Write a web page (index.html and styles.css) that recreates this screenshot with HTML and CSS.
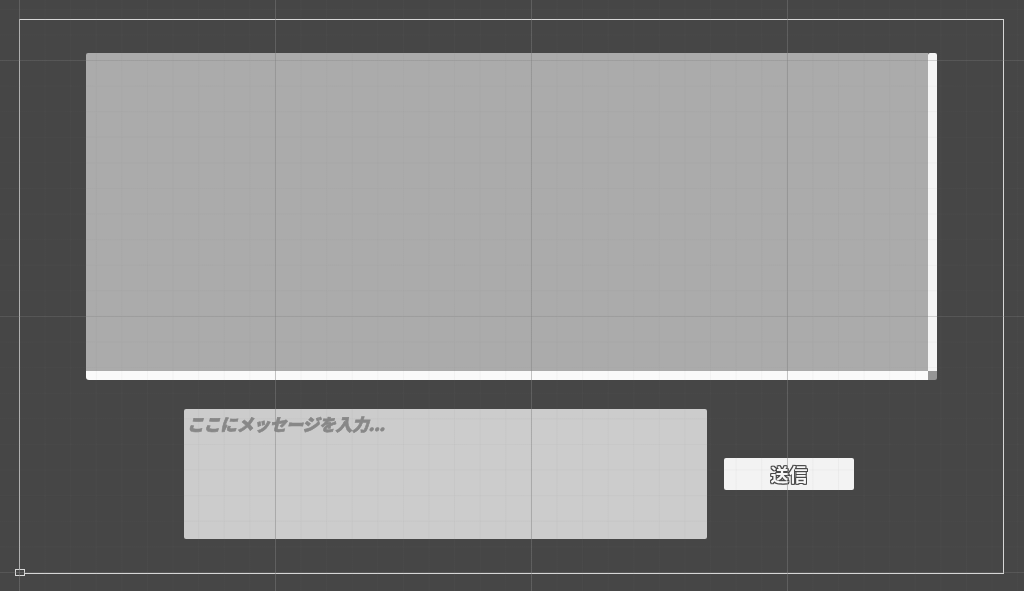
FILE: index.html
```html
<!DOCTYPE html>
<html lang="ja">
<head>
  <meta charset="UTF-8">
  <meta name="viewport" content="width=device-width, initial-scale=1.0">
  <title>Chat Canvas</title>
  <link rel="stylesheet" href="styles.css">
</head>
<body>
  <div class="canvas">
    <div class="chat-log">
      <div class="log-view"></div>
      <div class="scroll-v"></div>
      <div class="scroll-h"></div>
      <div class="scroll-corner"></div>
    </div>

    <div class="input-row">
      <div class="message-input">ここにメッセージを入力...</div>
      <button class="send-button" type="button">送信</button>
    </div>

    <span class="anchor"></span>
  </div>
  <div class="scene-grid"></div>
</body>
</html>
```

FILE: styles.css
```css
html, body {
  margin: 0;
  height: 100%;
  overflow: hidden;
}

body {
  position: relative;
  background-color: #464646;
  padding: 19px 20px 0 19px;
  box-sizing: border-box;
  font-family: "Noto Sans CJK JP", "Noto Sans", sans-serif;
}

.canvas {
  position: relative;
  box-sizing: border-box;
  height: 555px;
  border: 1px solid #d6d6d6;
  padding: 33px 66px 0 66px;
  filter: blur(0.35px);
}

.chat-log {
  display: grid;
  grid-template-columns: 842px 9px;
  grid-template-rows: 318px 9px;
  width: 851px;
}

.log-view {
  background: #ababab;
  border-radius: 2px 0 0 0;
}

.scroll-v {
  background: #f5f5f5;
  border-radius: 2px 2px 0 0;
}

.scroll-h {
  background: #fafafa;
  border-radius: 0 0 0 3px;
}

.scroll-corner {
  background: #959595;
  border-radius: 0 0 2px 0;
}

.input-row {
  display: flex;
  align-items: center;
  gap: 17px;
  margin: 29px 0 0 98px;
}

.message-input {
  box-sizing: border-box;
  width: 523px;
  height: 130px;
  padding: 3px 3px;
  background: #cccccc;
  border-radius: 2px;
  color: #888888;
  font-size: 17px;
  line-height: 24px;
  font-weight: 900;
  font-style: italic;
  letter-spacing: -0.5px;
  -webkit-text-stroke: 0.6px #888888;
  white-space: nowrap;
}

.send-button {
  width: 130px;
  height: 32px;
  padding: 0;
  border: none;
  border-radius: 2px;
  background: #f3f3f3;
  color: #f8f8f8;
  font-family: inherit;
  font-size: 18.5px;
  font-weight: 700;
  text-shadow:
    1px 0 0 #4a4a4a, -1px 0 0 #4a4a4a, 0 1px 0 #4a4a4a, 0 -1px 0 #4a4a4a,
    1px 1px 0 #4a4a4a, -1px 1px 0 #4a4a4a, 1px -1px 0 #4a4a4a, -1px -1px 0 #4a4a4a;
}

.anchor {
  position: absolute;
  left: -5px;
  bottom: -3px;
  width: 8px;
  height: 5px;
  border: 1px solid #d8d8d8;
  background: #464646;
}

/* editor grid sits over everything */
.scene-grid {
  position: absolute;
  inset: 0;
  pointer-events: none;
  filter: blur(0.35px);
  background-image:
    linear-gradient(to right, rgba(128, 128, 128, 0.42) 1px, transparent 1px),
    linear-gradient(to bottom, rgba(128, 128, 128, 0.26) 1px, transparent 1px),
    linear-gradient(to right, rgba(128, 128, 128, 0.06) 1px, transparent 1px),
    linear-gradient(to bottom, rgba(128, 128, 128, 0.05) 1px, transparent 1px);
  background-size: 256px 256px, 256px 256px, 25.6px 25.6px, 25.6px 25.6px;
  background-position: 19px 60px, 19px 60px, 19px 60px, 19px 60px;
}
```
